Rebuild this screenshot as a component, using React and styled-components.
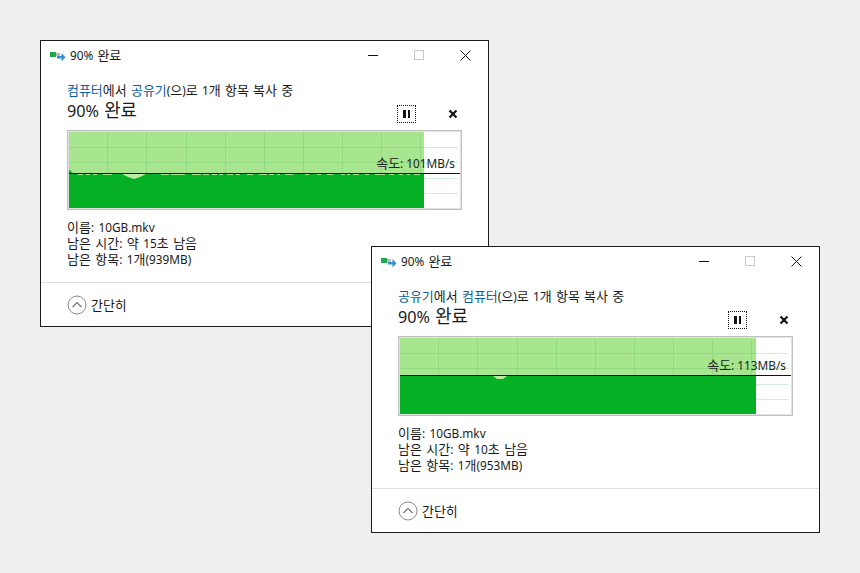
import React from "react";
import styled, { createGlobalStyle } from "styled-components";

const Global = createGlobalStyle`
  html, body { margin: 0; padding: 0; }
  body { background: #efefef; }
  #root { width: 860px; height: 573px; }
`;

const Desktop = styled.div`
  position: relative;
  width: 860px;
  height: 573px;
  overflow: hidden;
  background: #efefef;
  font-family: "Noto Sans", "Noto Sans CJK KR", sans-serif;
  color: #1a1a1a;
`;

const Win = styled.section`
  position: absolute;
  left: ${(p) => p.$x}px;
  top: ${(p) => p.$y}px;
  width: 449px;
  height: 287px;
  box-sizing: border-box;
  border: 1px solid #1c1c1c;
  background: #fff;
  display: flex;
  flex-direction: column;
`;

const TitleBar = styled.header`
  height: 28px;
  display: flex;
  align-items: center;
  padding-left: 9px;
  flex: none;
`;

const TitleText = styled.span`
  font-size: 11.8px;
  line-height: 16px;
  margin-left: 4px;
  flex: 1;
  word-spacing: 1px;
`;

const WinButtons = styled.div`
  display: flex;
  width: 138px;
  height: 28px;
  align-items: center;
`;

const WinButton = styled.div`
  width: 46px;
  height: 28px;
  display: flex;
  align-items: center;
  justify-content: center;
`;

const Body = styled.div`
  flex: 1;
  display: flex;
  flex-direction: column;
  padding: 13px 27px 0 26px;
`;

const Route = styled.div`
  font-size: 11.8px;
  line-height: 16px;
  height: 18px;
  word-spacing: 1.2px;
`;

const Place = styled.span`
  color: #0d5f9c;
`;

const Ko = styled.span`
  font-size: 1.1em;
  line-height: 1;
`;

const HeadRow = styled.div`
  display: flex;
  align-items: center;
  height: 24px;
`;

const Heading = styled.h1`
  font-size: 16.2px;
  line-height: 20px;
  font-weight: 400;
  margin: 0 0 2px;
  flex: 1;
  word-spacing: 1px;
`;

const PauseBox = styled.div`
  width: 19px;
  height: 18px;
  box-sizing: border-box;
  border: 1px dotted #111;
  display: flex;
  align-items: center;
  justify-content: center;
  gap: 2px;
  margin-top: 3px;
`;

const PauseBar = styled.i`
  display: block;
  width: 2.5px;
  height: 8px;
  background: #111;
`;

const Cancel = styled.div`
  width: 10px;
  height: 10px;
  margin: 3px 3px 0 32px;
  display: flex;
`;

const ChartWrap = styled.div`
  position: relative;
  width: 395px;
  height: 80px;
  margin-top: 6px;
  box-sizing: border-box;
  border: 1px solid #bfbfbf;
  padding: 1px;
  background: #e2e2e2;
`;

const ChartSvg = styled.svg`
  display: block;
`;

const Speed = styled.span`
  position: absolute;
  right: 6px;
  top: ${(p) => p.$top}px;
  font-size: 11.8px;
  line-height: 16px;
  color: #222;
`;

const Info = styled.div`
  margin-top: 9px;
  font-size: 11.8px;
  line-height: 16px;
  word-spacing: 1.4px;
`;

const Divider = styled.hr`
  margin: 0;
  border: 0;
  border-top: 1px solid #dfdfdf;
  flex: none;
`;

const Footer = styled.footer`
  height: 43px;
  flex: none;
  display: flex;
  align-items: center;
  padding-left: 26px;
  gap: 4px;
  font-size: 11.8px;
  line-height: 16px;
`;

const K = ({ children }) => (
  <>
    {String(children)
      .split(/([가-힣]+)/)
      .map((part, i) => (/[가-힣]/.test(part) ? <Ko key={i}>{part}</Ko> : part))}
  </>
);

const FlowIcon = () => (
  <svg width="16" height="14" viewBox="0 0 16 14">
    <rect x="0" y="4" width="6" height="5" fill="#20a84a" />
    <rect x="6" y="5" width="4" height="3" fill="#b4bdb6" />
    <path d="M7 8h4.5V5l4 4.2-4 4.2v-3H7z" fill="#3a8fd8" />
  </svg>
);

const LIGHT = "#a8e58f";
const PALE = "#bfeaa3";

function Chart({ data, fill, lineY, speed, dashes, dashY }) {
  const w = 391;
  const h = 76;
  const vs = [38, 77, 117, 156, 195, 234, 273, 312, 351];
  const hs = [15, 30, 46, 61];
  return (
    <ChartWrap>
      <ChartSvg width={w} height={h} viewBox={`0 0 ${w} ${h}`}>
        <rect width={w} height={h} fill="#fff" />
        <rect width={fill} height={h} fill={LIGHT} />
        {vs.map((x) => (
          <line key={x} x1={x + 0.5} x2={x + 0.5} y1="0" y2={h} stroke="#90da7f" />
        ))}
        {hs.map((y) => (
          <React.Fragment key={y}>
            <line x1="0" x2={fill} y1={y + 0.5} y2={y + 0.5} stroke="#90da7f" />
            <line x1={fill} x2={w - 2} y1={y + 0.5} y2={y + 0.5} stroke="#cfeeda" />
          </React.Fragment>
        ))}
        <rect x="0" y={lineY} width={fill} height={h - lineY} fill={PALE} />
        <polygon points={`${data} ${fill},${h} 0,${h}`} fill="#06b025" />
        {dashes.map(([x, len]) => (
          <rect key={x} x={x} y={dashY} width={len} height="1" fill={LIGHT} />
        ))}
        <line x1="0" x2={w} y1={lineY + 0.5} y2={lineY + 0.5} stroke="#111" />
      </ChartSvg>
      <Speed $top={lineY - 17}><K>{speed}</K></Speed>
    </ChartWrap>
  );
}

function CopyWindow({ x, y, from, to, speed, name, left, items, ...chart }) {
  return (
    <Win $x={x} $y={y}>
      <TitleBar>
        <FlowIcon />
        <TitleText><K>90% 완료</K></TitleText>
        <WinButtons>
          <WinButton>
            <svg width="10" height="10"><line x1="0" x2="10" y1="5.5" y2="5.5" stroke="#111" /></svg>
          </WinButton>
          <WinButton>
            <svg width="10" height="10"><rect x="0.5" y="0.5" width="9" height="9" fill="none" stroke="#c8c8c8" /></svg>
          </WinButton>
          <WinButton>
            <svg width="11" height="11"><path d="M.5.5l10 10M10.5.5l-10 10" stroke="#111" fill="none" /></svg>
          </WinButton>
        </WinButtons>
      </TitleBar>
      <Body>
        <Route>
          <Place><K>{from}</K></Place><K>에서 </K><Place><K>{to}</K></Place><K>(으)로 1개 항목 복사 중</K>
        </Route>
        <HeadRow>
          <Heading><K>90% 완료</K></Heading>
          <PauseBox><PauseBar /><PauseBar /></PauseBox>
          <Cancel>
            <svg width="10" height="10" viewBox="0 0 10 10"><path d="M1.5 1.5l7 7M8.5 1.5l-7 7" stroke="#111" strokeWidth="2.2" /></svg>
          </Cancel>
        </HeadRow>
        <Chart speed={speed} {...chart} />
        <Info>
          <div><K>{`이름: ${name}`}</K></div>
          <div><K>{`남은 시간: 약 ${left} 남음`}</K></div>
          <div><K>{`남은 항목: ${items}`}</K></div>
        </Info>
      </Body>
      <Divider />
      <Footer>
        <svg width="20" height="20" viewBox="0 0 20 20">
          <circle cx="10" cy="10" r="9" fill="none" stroke="#8a8a8a" />
          <path d="M5.5 12L10 7.5l4.5 4.5" fill="none" stroke="#777" strokeWidth="1.2" />
        </svg>
        <span><K>간단히</K></span>
      </Footer>
    </Win>
  );
}

const DASHES_A = [
  [9, 5], [17, 4], [24, 4], [34, 9], [92, 8], [102, 14], [123, 9], [134, 6], [143, 5], [150, 4],
  [158, 6], [167, 4], [178, 6], [190, 8], [200, 5], [208, 3], [216, 8], [236, 4], [248, 4],
  [258, 6], [272, 4], [278, 3], [284, 6], [296, 4], [306, 10], [320, 5], [330, 4], [338, 3], [345, 6],
];

export default function App() {
  return (
    <Desktop>
      <Global />
      <CopyWindow
        x={40} y={40} from="컴퓨터" to="공유기" speed="속도: 101MB/s" name="10GB.mkv" left="15초" items="1개(939MB)"
        fill={355} lineY={41} dashY={42} dashes={DASHES_A}
        data="0,38 1,38 4,42 53,42 59,45 65,47 71,45 77,42 355,42"
      />
      <CopyWindow
        x={371} y={246} from="공유기" to="컴퓨터" speed="속도: 113MB/s" name="10GB.mkv" left="10초" items="1개(953MB)"
        fill={356} lineY={37} dashY={38} dashes={[]}
        data="0,38 93,38 97,41 103,41 107,38 356,38"
      />
    </Desktop>
  );
}
